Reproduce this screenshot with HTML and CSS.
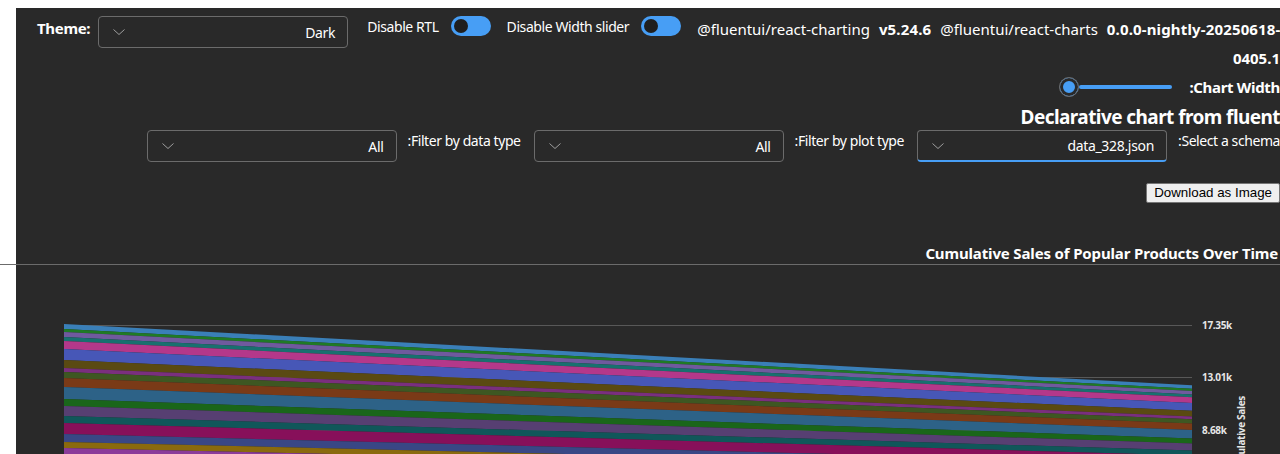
FILE: index.html
```html
<!DOCTYPE html>
<html lang="en">
<head>
<meta charset="utf-8">
<title>Declarative chart</title>
<link rel="stylesheet" href="styles.css">
</head>
<body>
<div class="app">
  <div class="top">
    <div class="theme">
      <span class="theme-label">Theme:</span>
      <div class="dd dd-theme"><span class="dd-text">Dark</span><svg class="chev" width="12" height="6" viewBox="0 0 12 6"><path d="M0.5 0.5 L6 5.5 L11.5 0.5" fill="none" stroke="#9e9e9e" stroke-width="1"/></svg></div>
    </div>
    <div class="switch-group sg-rtl">
      <span class="switch-label">Disable RTL</span>
      <span class="toggle"><span class="knob"></span></span>
    </div>
    <div class="switch-group sg-width">
      <span class="switch-label">Disable Width slider</span>
      <span class="toggle"><span class="knob"></span></span>
    </div>
    <div class="versions">
      <div class="vline"><span class="pkg">@fluentui/react-charting</span><b class="ver">v5.24.6</b><span class="pkg">@fluentui/react-charts</span><b class="ver">0.0.0-nightly-20250618-</b></div>
      <div class="vline2"><b>0405.1</b></div>
    </div>
  </div>

  <div class="rtl-row slider-row">
    <span class="bold-label">Chart Width:</span>
    <div class="slider"><span class="track"></span><span class="thumb"></span></div>
  </div>

  <h1 class="heading">Declarative chart from fluent</h1>

  <div class="rtl-row filters">
    <span class="filter-label">Select a schema:</span>
    <div class="dd dd-focus"><span class="dd-text">data_328.json</span><svg class="chev" width="12" height="6" viewBox="0 0 12 6"><path d="M0.5 0.5 L6 5.5 L11.5 0.5" fill="none" stroke="#9e9e9e" stroke-width="1"/></svg></div>
    <span class="filter-label">Filter by plot type:</span>
    <div class="dd"><span class="dd-text">All</span><svg class="chev" width="12" height="6" viewBox="0 0 12 6"><path d="M0.5 0.5 L6 5.5 L11.5 0.5" fill="none" stroke="#9e9e9e" stroke-width="1"/></svg></div>
    <span class="filter-label">Filter by data type:</span>
    <div class="dd"><span class="dd-text">All</span><svg class="chev" width="12" height="6" viewBox="0 0 12 6"><path d="M0.5 0.5 L6 5.5 L11.5 0.5" fill="none" stroke="#9e9e9e" stroke-width="1"/></svg></div>
  </div>

  <div class="download-row"><button class="download">Download as Image</button></div>

  <div class="chart-title">Cumulative Sales of Popular Products Over Time</div>
  <div class="divider"></div>

  <svg class="chart" width="1264" height="294" viewBox="16 266 1264 294">
    <g stroke="#585858" stroke-width="1">
      <line x1="64" y1="326.5" x2="1192" y2="326.5"/>
      <line x1="64" y1="378.5" x2="1192" y2="378.5"/>
      <line x1="64" y1="431.5" x2="1192" y2="431.5"/>
    </g>
    <g>
      <polygon fill="#3a7fb8" points="64,325 1192,386.2 1192,389.7 64,330"/>
      <polygon fill="#1f7a26" points="64,330 1192,389.7 1192,391.9 64,333"/>
      <polygon fill="#6f5a9e" points="64,333 1192,391.9 1192,395.4 64,338"/>
      <polygon fill="#18706f" points="64,338 1192,395.4 1192,398.3 64,342"/>
      <polygon fill="#b4388a" points="64,342 1192,398.3 1192,403.9 64,350"/>
      <polygon fill="#4757b7" points="64,350 1192,403.9 1192,411.8 64,361"/>
      <polygon fill="#5a4a12" points="64,361 1192,411.8 1192,417.4 64,369"/>
      <polygon fill="#7a2f7e" points="64,369 1192,417.4 1192,420.3 64,373"/>
      <polygon fill="#3e5722" points="64,373 1192,420.3 1192,424.5 64,379"/>
      <polygon fill="#7a3a17" points="64,379 1192,424.5 1192,430.9 64,388"/>
      <polygon fill="#2d6287" points="64,388 1192,430.9 1192,439.4 64,400"/>
      <polygon fill="#1a661a" points="64,400 1192,439.4 1192,444.4 64,407"/>
      <polygon fill="#573f72" points="64,407 1192,444.4 1192,451.5 64,417"/>
      <polygon fill="#10575a" points="64,417 1192,451.5 1192,456.5 64,424"/>
      <polygon fill="#87105a" points="64,424 1192,456.5 1192,464.3 64,435"/>
      <polygon fill="#394785" points="64,435 1192,464.3 1192,470 64,443"/>
      <polygon fill="#8a6a0e" points="64,443 1192,470 1192,474.2 64,449"/>
      <polygon fill="#8b3b9a" points="64,449 1192,474.2 1192,478.5 64,455"/>
      <polygon fill="#1b6b6b" points="64,455 1192,478.5 1192,489.1 64,470"/>
      <polygon fill="#6b3a1a" points="64,470 1192,489.1 1192,503.3 64,490"/>
      <polygon fill="#2e5a8a" points="64,490 1192,503.3 1192,536 64,536"/>
    </g>
    <g class="tick" fill="#e6e6e6">
      <text x="1202" y="330">17.35k</text>
      <text x="1202" y="382">13.01k</text>
      <text x="1202" y="435">8.68k</text>
    </g>
    <text class="axis-title" fill="#e6e6e6" text-anchor="end" transform="translate(1245,397) rotate(-90)">Cumulative Sales</text>
  </svg>
</div>
</body>
</html>
```

FILE: styles.css
```css
* { box-sizing: border-box; }
html, body { margin: 0; height: 100%; }
body {
  background: #ffffff;
  overflow: hidden;
  font-family: "Noto Sans", "Open Sans", sans-serif;
  letter-spacing: -0.02em;
}
.app {
  margin: 8px 0 0 16px;
  background: #292929;
  color: #ffffff;
  height: 446px;
}

/* top row */
.top {
  display: flex;
  align-items: flex-start;
  padding: 8px 0 0 21px;
}
.theme {
  display: flex;
  align-items: flex-start;
  gap: 8px;
}
.theme-label {
  font-weight: 700;
  font-size: 15px;
  line-height: 20px;
  margin-top: 2px;
}
.dd {
  width: 250px;
  height: 32px;
  border: 1px solid #6b6b6b;
  border-radius: 4px;
  direction: rtl;
  display: flex;
  align-items: center;
  justify-content: space-between;
  padding: 0 12px 0 14px;
  font-size: 14px;
  color: #ffffff;
  flex: none;
}
.dd-focus {
  border-bottom: 2px solid #479ef5;
}
.chev { display: block; }
.switch-group {
  display: flex;
  align-items: center;
  gap: 12px;
  height: 20px;
  font-size: 14px;
  letter-spacing: -0.03em;
}
.sg-rtl { margin-left: 19px; }
.sg-width { margin-left: 16px; }
.toggle {
  width: 40px;
  height: 20px;
  border-radius: 10px;
  background: #479ef5;
  display: flex;
  align-items: center;
  padding: 0 3px;
}
.knob {
  width: 14px;
  height: 14px;
  border-radius: 50%;
  background: #1f1f1f;
}
.versions {
  flex: 1;
  min-width: 0;
  margin-left: 16px;
  margin-top: -1px;
  font-size: 15px;
  line-height: 29px;
  letter-spacing: 0;
}
.vline { white-space: nowrap; }
.pkg { margin-right: 9px; }
.ver { margin-right: 9px; font-weight: 700; letter-spacing: 0.01em; }
.vline2 { text-align: right; }

/* right-to-left rows */
.rtl-row {
  direction: rtl;
  display: flex;
}
.slider-row {
  align-items: center;
  gap: 17px;
  height: 22px;
  margin-top: 3px;
}
.bold-label {
  font-weight: 700;
  font-size: 15px;
}
.slider {
  width: 113px;
  display: flex;
  align-items: center;
}
.track {
  flex: 1;
  height: 4px;
  border-radius: 2px;
  background: #479ef5;
}
.thumb {
  width: 20px;
  height: 20px;
  border-radius: 50%;
  background: #479ef5;
  border: 1px solid #6b6b6b;
  box-shadow: inset 0 0 0 3px #292929;
}
.heading {
  direction: rtl;
  margin: 6px 0 0;
  font-size: 19px;
  line-height: 26px;
  font-weight: 700;
  letter-spacing: -0.03em;
}
.filters {
  align-items: flex-start;
}
.filter-label {
  font-size: 14px;
  line-height: 20px;
  padding-top: 1px;
  margin: 0 13px 0 11px;
  letter-spacing: -0.03em;
}
.filter-label:first-child {
  margin-right: 0;
}
.download-row {
  display: flex;
  justify-content: flex-end;
  margin-top: 20px;
  padding-top: 1px;
}
.download {
  font-family: "Liberation Sans", Arial, sans-serif;
  letter-spacing: 0;
  font-size: 13.33px;
  height: 20px;
  line-height: 16px;
  padding: 0 7px;
  background: #efefef;
  color: #000000;
  border: 1px solid #767676;
  border-radius: 2px;
}
.chart-title {
  direction: rtl;
  margin-top: 40px;
  font-size: 15px;
  font-weight: 700;
  line-height: 21px;
  padding-right: 2px;
  letter-spacing: -0.01em;
}
.divider {
  height: 1px;
  background: #6b6b6b;
  margin-left: -16px;
}
.chart {
  display: block;
}
.tick text {
  font-family: "Noto Sans", sans-serif;
  font-size: 10px;
  font-weight: 700;
}
.axis-title {
  font-family: "Noto Sans", sans-serif;
  font-size: 10px;
  font-weight: 700;
}
```
